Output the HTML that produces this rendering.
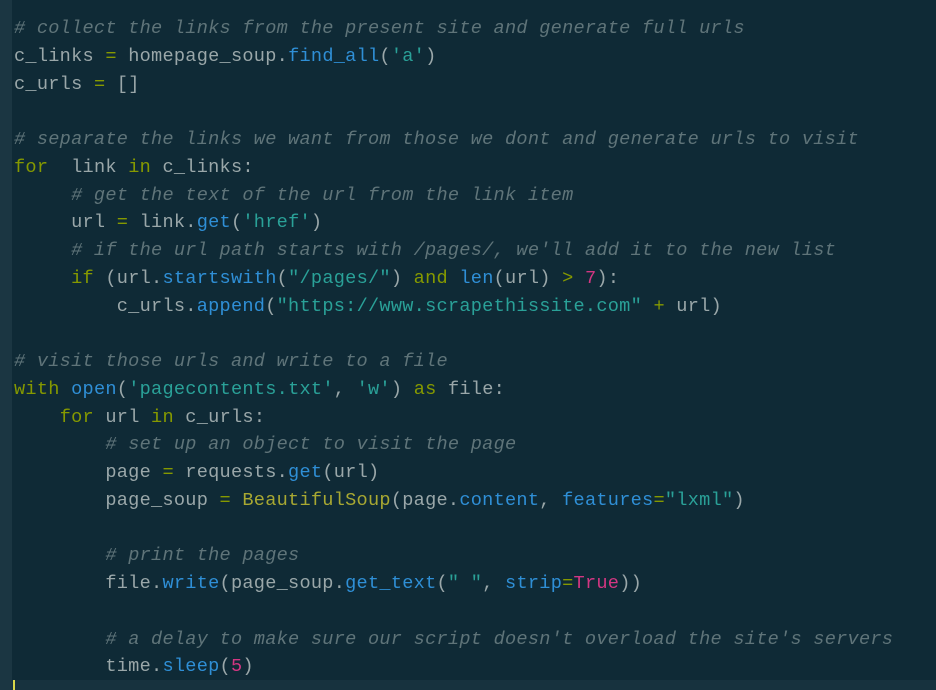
<!DOCTYPE html>
<html><head><meta charset="utf-8"><style>
html,body{margin:0;padding:0;width:936px;height:690px;overflow:hidden;background:#0f2a36;}
.g{position:absolute;left:0;top:0;width:12px;height:690px;background:#1b3642;}
.cl{position:absolute;left:12px;top:680px;width:924px;height:10px;background:#17323e;}
.cur{position:absolute;left:13px;top:680px;width:2px;height:10px;background:#d8d84a;}
pre{position:absolute;left:14px;top:15px;margin:0;font-family:"Liberation Mono",monospace;font-size:18.6px;letter-spacing:0.26px;line-height:27.75px;color:#9aa7a9;}
.c{color:#5f7479;font-style:italic}
.k{color:#859900}
.f{color:#2f8fd6}
.s{color:#2aa198}
.n{color:#d33682}
.o{color:#859900}
.y{color:#a8a832}
</style></head><body>
<div class="g"></div><div class="cl"></div><div class="cur"></div>
<pre><span class="c"># collect the links from the present site and generate full urls</span>
c_links <span class="o">=</span> homepage_soup.<span class="f">find_all</span>(<span class="s">'a'</span>)
c_urls <span class="o">=</span> []

<span class="c"># separate the links we want from those we dont and generate urls to visit</span>
<span class="k">for</span>  link <span class="k">in</span> c_links:
     <span class="c"># get the text of the url from the link item</span>
     url <span class="o">=</span> link.<span class="f">get</span>(<span class="s">'href'</span>)
     <span class="c"># if the url path starts with /pages/, we'll add it to the new list</span>
     <span class="k">if</span> (url.<span class="f">startswith</span>(<span class="s">"/pages/"</span>) <span class="k">and</span> <span class="f">len</span>(url) <span class="o">&gt;</span> <span class="n">7</span>):
         c_urls.<span class="f">append</span>(<span class="s">"https://www.scrapethissite.com"</span> <span class="o">+</span> url)

<span class="c"># visit those urls and write to a file</span>
<span class="k">with</span> <span class="f">open</span>(<span class="s">'pagecontents.txt'</span>, <span class="s">'w'</span>) <span class="k">as</span> file:
    <span class="k">for</span> url <span class="k">in</span> c_urls:
        <span class="c"># set up an object to visit the page</span>
        page <span class="o">=</span> requests.<span class="f">get</span>(url)
        page_soup <span class="o">=</span> <span class="y">BeautifulSoup</span>(page.<span class="f">content</span>, <span class="f">features</span><span class="o">=</span><span class="s">"lxml"</span>)

        <span class="c"># print the pages</span>
        file.<span class="f">write</span>(page_soup.<span class="f">get_text</span>(<span class="s">" "</span>, <span class="f">strip</span><span class="o">=</span><span class="n">True</span>))

        <span class="c"># a delay to make sure our script doesn't overload the site's servers</span>
        time.<span class="f">sleep</span>(<span class="n">5</span>)</pre>
</body></html>
